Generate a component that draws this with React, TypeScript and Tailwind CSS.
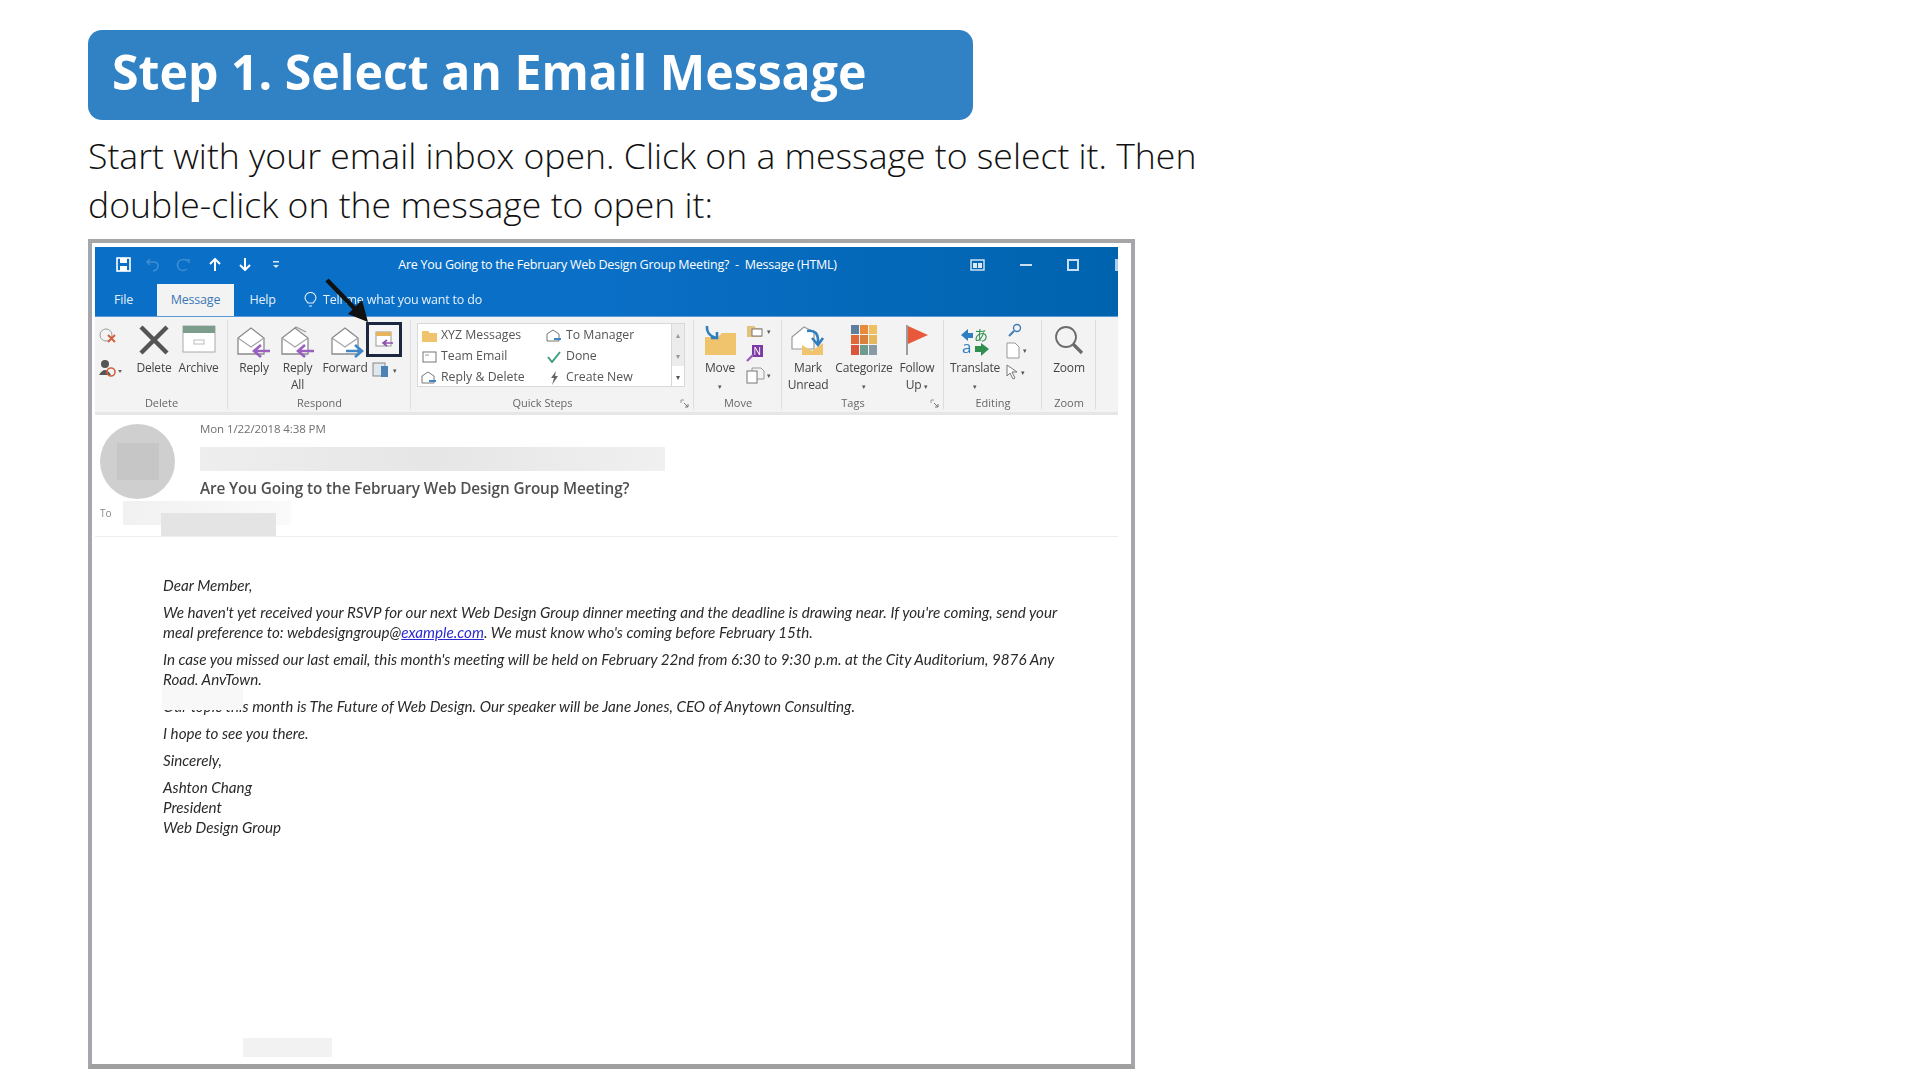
import React from 'react';

const Envelope = ({ arrow, back }: { arrow: string; back?: boolean }) => (
  <svg width="36" height="34" viewBox={arrow === 'left' ? '0 0 36 34' : '-3 0 36 34'} fill="none" className="overflow-visible">
    {back && <path d="M8 10 L16 2 L26 7" stroke="#999" strokeWidth="1.2" />}
    <path d="M2 13 L15 3 L28 13 V29 H2 Z" fill="#fff" stroke="#8a8a8a" strokeWidth="1.3" />
    <path d="M2 13 L15 22 L28 13" stroke="#a5a5a5" strokeWidth="1.2" />
    {arrow === 'left' ? (
      <path d="M34 26 H19 M25 20 L18 26 L25 32" stroke="#9a5fc0" strokeWidth="2.6" />
    ) : (
      <path d="M16 26 H31 M25 20 L32 26 L25 32" stroke="#3f86c6" strokeWidth="2.6" />
    )}
  </svg>
);

const DeleteX = () => (
  <svg width="32" height="30" viewBox="0 0 32 30" fill="none">
    <path d="M3 2 L29 28 M29 2 L3 28" stroke="#555" strokeWidth="4.5" />
  </svg>
);

const ArchiveBox = () => (
  <svg width="34" height="28" viewBox="0 0 34 28">
    <rect x="1" y="1" width="32" height="26" fill="#fff" stroke="#aaa" />
    <rect x="1" y="1" width="32" height="7" fill="#7c9c8c" />
    <rect x="12" y="15" width="10" height="4" fill="none" stroke="#bbb" />
  </svg>
);

const Folder = () => (
  <svg width="36" height="32" viewBox="0 0 36 32">
    <path d="M3 12 H16 L20 8 H34 V30 H3 Z" fill="#efc46c" />
    <path d="M5 1 Q4 10 14 13 M9 13 H15 V7" fill="none" stroke="#2f7fc0" strokeWidth="2.6" />
  </svg>
);

const MarkUnread = () => (
  <svg width="36" height="32" viewBox="0 0 36 32" fill="none">
    <path d="M2 12 L14 2 L24 7 V24 H2 Z" fill="#fff" stroke="#9a9a9a" strokeWidth="1.2" />
    <path d="M12 20 L22 26 L33 18 V30 H12 Z" fill="#efc46c" />
    <path d="M17 6 Q29 4 28 18 M22 13 L28 20 L33 13" stroke="#2f7fc0" strokeWidth="2.6" />
  </svg>
);

const Categorize = () => (
  <svg width="26" height="30" viewBox="0 0 26 30">
    <rect x="0" y="0" width="8" height="9" fill="#5f7f9f" />
    <rect x="9" y="0" width="8" height="9" fill="#e88a3c" />
    <rect x="18" y="0" width="8" height="9" fill="#f0c060" />
    <rect x="0" y="10" width="8" height="9" fill="#e0693c" />
    <rect x="9" y="10" width="8" height="9" fill="#d8803c" />
    <rect x="18" y="10" width="8" height="9" fill="#e6b85c" />
    <rect x="0" y="20" width="8" height="10" fill="#d8573c" />
    <rect x="9" y="20" width="8" height="10" fill="#6d9c8c" />
    <rect x="18" y="20" width="8" height="10" fill="#8a9aa5" />
  </svg>
);

const Flag = () => (
  <svg width="24" height="30" viewBox="0 0 24 30">
    <path d="M2 0 V30" stroke="#777" strokeWidth="1.4" />
    <path d="M3 1 L23 10 L3 19 Z" fill="#e8583a" />
  </svg>
);

const Translate = () => (
  <svg width="32" height="34" viewBox="0 0 32 34" fill="none">
    <path d="M2 10 L9 4 V8 H14 V13 H9 V16 Z" fill="#2f7fc0" />
    <text x="15" y="15" fontSize="14" fill="#2f8f4f" fontFamily="Noto Sans CJK JP, sans-serif">あ</text>
    <text x="3" y="28" fontSize="17" fill="#2f7fc0" fontFamily="Open Sans, sans-serif">a</text>
    <path d="M30 24 L22 31 V27 H16 V21 H22 V18 Z" fill="#2f8f4f" />
  </svg>
);

const Magnifier = () => (
  <svg width="30" height="30" viewBox="0 0 30 30" fill="none">
    <circle cx="12" cy="12" r="10" stroke="#6b6b6b" strokeWidth="1.8" />
    <path d="M19 19 L28 28" stroke="#6b6b6b" strokeWidth="3.2" />
  </svg>
);

const Launcher = () => (
  <svg width="9" height="9" viewBox="0 0 9 9" fill="none">
    <path d="M1 4 V1 H4" stroke="#999" />
    <path d="M4 4 L8 8 M8 5 V8 H5" stroke="#777" />
  </svg>
);

const Caret = () => <span className="text-[7px] leading-none text-[#555]">▾</span>;

const RibbonButton = ({
  width,
  icon,
  label,
  second,
}: {
  width: string;
  icon?: React.ReactNode;
  label: string;
  second?: React.ReactNode;
}) => (
  <div className={`flex flex-col items-center pt-[8px] ${width}`}>
    <div className="flex h-[34px] items-start justify-center">{icon}</div>
    <span className="text-[12px] leading-[17px] whitespace-nowrap tracking-[-0.2px] text-[#444]">{label}</span>
    {second && <span className="text-[12px] leading-[17px] whitespace-nowrap tracking-[-0.2px] text-[#444]">{second}</span>}
  </div>
);

const Group = ({
  width,
  label,
  launcher,
  children,
}: {
  width: string;
  label: string;
  launcher?: boolean;
  children: React.ReactNode;
}) => (
  <div className={`relative flex flex-col ${width}`}>
    <div className="flex h-[77px]">{children}</div>
    <div
      className={`flex h-[18px] items-start justify-center text-[11px] leading-[18px] text-[#666] ${
        launcher ? 'pr-[20px]' : ''
      }`}
    >
      {label}
    </div>
    {launcher && (
      <div className="absolute right-[5px] bottom-[4px]">
        <Launcher />
      </div>
    )}
    <div className="absolute top-[3px] right-0 bottom-[3px] w-px bg-[#dddddd]" />
  </div>
);

const QuickRow = ({ icon, label }: { icon: React.ReactNode; label: string }) => (
  <div className="flex h-[21px] items-center">
    <div className="flex w-[22px] justify-center">{icon}</div>
    <span className="pl-[1px] text-[12.3px] whitespace-nowrap text-[#555]">{label}</span>
  </div>
);

const MiniEnvelope = () => (
  <svg width="16" height="14" viewBox="0 0 16 14" fill="none">
    <path d="M1 5 L7 1 L13 5 V12 H1 Z" fill="#fff" stroke="#777" />
    <path d="M8 10 H15" stroke="#3f86c6" strokeWidth="2" />
  </svg>
);

const WindowChrome = () => (
  <div className="flex h-[35px] items-center text-white">
    <div className="flex w-[297px] items-center">
      <svg className="ml-[21px]" width="15" height="15" viewBox="0 0 15 15" fill="none">
        <rect x="1" y="1" width="13" height="13" stroke="#fff" strokeWidth="1.6" />
        <rect x="4" y="1" width="7" height="5" fill="#fff" />
        <rect x="4" y="9" width="7" height="5" fill="#fff" />
      </svg>
      <svg className="ml-[15px]" width="13" height="14" viewBox="0 0 13 14" fill="none">
        <path d="M4 1 L1 4 L4 7 M1 4 H8 Q12 4 12 8 Q12 12 7 13" stroke="#3f8ed2" strokeWidth="1.5" />
      </svg>
      <svg className="ml-[17px]" width="14" height="14" viewBox="0 0 14 14" fill="none">
        <path d="M10 2 H13 V5 M12 3 Q7 0 3 3 Q0 7 3 11 Q7 14 11 11" stroke="#3f8ed2" strokeWidth="1.5" />
      </svg>
      <svg className="ml-[19px]" width="12" height="13" viewBox="0 0 12 13" fill="none">
        <path d="M1 6 L6 1 L11 6 M6 2 V13" stroke="#fff" strokeWidth="2" />
      </svg>
      <svg className="ml-[18px]" width="12" height="13" viewBox="0 0 12 13" fill="none">
        <path d="M1 7 L6 12 L11 7 M6 11 V0" stroke="#fff" strokeWidth="2" />
      </svg>
      <svg className="ml-[22px]" width="6" height="9" viewBox="0 0 6 9" fill="#dbe9f6">
        <rect x="0" y="1" width="6" height="1.5" />
        <path d="M0 5 H6 L3 8 Z" />
      </svg>
    </div>
    <div className="w-[451px] pt-[1px] text-center text-[12.5px] tracking-[-0.25px] whitespace-nowrap">
      Are You Going to the February Web Design Group Meeting?&nbsp; -&nbsp; Message (HTML)
    </div>
    <div className="flex flex-1 items-center justify-end">
      <svg width="15" height="12" viewBox="0 0 15 12" fill="none">
        <rect x="1" y="1" width="13" height="10" stroke="#dbe9f6" strokeWidth="1.4" />
        <rect x="3" y="4" width="4" height="5" fill="#dbe9f6" />
        <rect x="8" y="4" width="4" height="5" fill="#dbe9f6" />
      </svg>
      <div className="ml-[35px] h-[2px] w-[12px] bg-[#c9def2]" />
      <div className="ml-[35px] h-[12px] w-[12px] border-2 border-[#c9def2]" />
      <div className="ml-[36px] h-[12px] w-[3px] bg-[#a9cdea]" />
    </div>
  </div>
);

const TabRow = () => (
  <div className="flex h-[34px] items-end text-[12.5px] tracking-[-0.2px] text-[#e6f0fa]">
    <div className="flex h-[32px] w-[62px] items-center pl-[19px]">File</div>
    <div className="flex h-[32px] w-[77px] items-center justify-center bg-[#f3f3f3] text-[#3a78b5]">Message</div>
    <div className="flex h-[32px] w-[57px] items-center justify-center">Help</div>
    <div className="flex h-[32px] items-center pl-[13px]">
      <svg width="13" height="16" viewBox="0 0 13 16" fill="none">
        <path d="M4 11 Q1 8 1 6 A5.5 5.5 0 0 1 12 6 Q12 8 9 11 Z M5 14 H8" stroke="#e6f0fa" strokeWidth="1.1" />
      </svg>
      <span className="pl-[6px] whitespace-nowrap">Tell me what you want to do</span>
    </div>
  </div>
);

const Ribbon = () => (
  <div className="flex h-[95px] bg-[#f3f3f3]">
    <Group width="w-[133px]" label="Delete">
      <div className="flex w-[37px] flex-col items-start gap-[14px] pt-[10px] pl-[3px]">
        <svg width="20" height="18" viewBox="0 0 20 18" fill="none">
          <circle cx="8" cy="8" r="6" stroke="#999" />
          <path d="M10 8 L17 15 M17 8 L10 15" stroke="#d2603c" strokeWidth="1.8" />
        </svg>
        <svg width="24" height="18" viewBox="0 0 24 18">
          <circle cx="7" cy="5" r="4" fill="#555" />
          <path d="M1 16 Q7 6 13 16 Z" fill="#555" />
          <circle cx="13" cy="13" r="4" fill="none" stroke="#d2603c" strokeWidth="1.6" />
          <path d="M20 11 H24 L22 14 Z" fill="#666" />
        </svg>
      </div>
      <RibbonButton width="w-[44px]" icon={<DeleteX />} label="Delete" />
      <RibbonButton width="w-[45px]" icon={<ArchiveBox />} label="Archive" />
    </Group>
    <Group width="w-[183px]" label="Respond">
      <div className="w-[6px]" />
      <RibbonButton width="w-[40px]" icon={<Envelope arrow="left" />} label="Reply" />
      <RibbonButton width="w-[47px]" icon={<Envelope arrow="left" back />} label="Reply" second="All" />
      <RibbonButton width="w-[48px]" icon={<Envelope arrow="right" />} label="Forward" />
      <div className="ml-[-3px] flex flex-col items-center pt-[5px]">
        <div className="flex h-[35px] w-[36px] items-center justify-center border-[3.5px] border-[#1c2840] bg-[#f5f5f5]">
          <svg width="19" height="18" viewBox="0 0 19 18">
            <rect x="1" y="1" width="15" height="14" fill="#fff" stroke="#999" />
            <rect x="1" y="1" width="15" height="4" fill="#e5b45c" />
            <path d="M9 12 H18 M12 9 L8 12 L12 15" fill="none" stroke="#8a4fb0" strokeWidth="1.6" />
          </svg>
        </div>
        <div className="flex items-center gap-[3px] pt-[5px]">
          <svg width="18" height="16" viewBox="0 0 18 16">
            <rect x="1" y="1" width="12" height="13" fill="#dfe8ef" stroke="#888" />
            <rect x="9" y="4" width="7" height="11" fill="#4a82b5" />
          </svg>
          <Caret />
        </div>
      </div>
    </Group>
    <Group width="w-[283px]" label="Quick Steps" launcher>
      <div className="mt-[6px] ml-[6px] flex h-[64px] w-[255px] border border-[#d8d8d8] bg-white pt-[1px]">
        <div className="w-[125px]">
          <QuickRow
            label="XYZ Messages"
            icon={
              <svg width="17" height="13" viewBox="0 0 17 13">
                <path d="M1 2 H7 L9 4 H16 V13 H1 Z" fill="#efc46c" />
              </svg>
            }
          />
          <QuickRow
            label="Team Email"
            icon={
              <svg width="15" height="12" viewBox="0 0 15 12" fill="none">
                <rect x="1" y="1" width="13" height="10" stroke="#777" />
                <path d="M3 4 H7" stroke="#999" />
              </svg>
            }
          />
          <QuickRow label="Reply & Delete" icon={<MiniEnvelope />} />
        </div>
        <div>
          <QuickRow label="To Manager" icon={<MiniEnvelope />} />
          <QuickRow
            label="Done"
            icon={
              <svg width="14" height="12" viewBox="0 0 14 12" fill="none">
                <path d="M1 6 L5 11 L13 1" stroke="#3f9c7c" strokeWidth="2" />
              </svg>
            }
          />
          <QuickRow
            label="Create New"
            icon={
              <svg width="10" height="14" viewBox="0 0 10 14">
                <path d="M7 0 L2 7 H5 L3 14 L9 5 H6 Z" fill="#666" />
              </svg>
            }
          />
        </div>
      </div>
      <div className="mt-[6px] flex h-[64px] w-[13px] flex-col border-y border-r border-[#d8d8d8] text-center text-[8px] leading-[21px] text-[#999]">
        <div className="h-[21px] bg-[#ececec]">▴</div>
        <div className="h-[21px] bg-[#ececec]">▾</div>
        <div className="h-[20px] bg-white text-[#555]">▾</div>
      </div>
    </Group>
    <Group width="w-[88px]" label="Move">
      <div className="w-[6px]" />
      <RibbonButton width="w-[40px]" icon={<Folder />} label="Move" second={<Caret />} />
      <div className="flex flex-col gap-[5px] pt-[6px] pl-[6px]">
        <div className="flex items-center gap-[2px]">
          <svg width="19" height="16" viewBox="0 0 19 16">
            <path d="M1 3 H8 L10 5 H16 V14 H1 Z" fill="#e3c27e" />
            <rect x="6" y="6" width="10" height="7" fill="#fff" stroke="#777" />
          </svg>
          <Caret />
        </div>
        <svg width="18" height="18" viewBox="0 0 18 18">
          <rect x="6" y="1" width="11" height="12" fill="#7d3aa5" />
          <text x="7.5" y="11" fontSize="10" fill="#fff" fontFamily="Open Sans, sans-serif">N</text>
          <path d="M1 17 L7 11" stroke="#9a5fc0" strokeWidth="2.4" />
        </svg>
        <div className="flex items-center gap-[2px]">
          <svg width="19" height="17" viewBox="0 0 19 17" fill="none">
            <rect x="1" y="4" width="10" height="12" fill="#fff" stroke="#777" />
            <path d="M6 4 V1 H15 L18 4 V12 H11" stroke="#999" />
          </svg>
          <Caret />
        </div>
      </div>
    </Group>
    <Group width="w-[162px]" label="Tags" launcher>
      <RibbonButton width="w-[52px]" icon={<MarkUnread />} label="Mark" second="Unread" />
      <RibbonButton width="w-[60px]" icon={<Categorize />} label="Categorize" second={<Caret />} />
      <RibbonButton
        width="w-[46px]"
        icon={<Flag />}
        label="Follow"
        second={
          <>
            Up <Caret />
          </>
        }
      />
    </Group>
    <Group width="w-[98px]" label="Editing">
      <RibbonButton width="w-[62px]" icon={<Translate />} label="Translate" second={<Caret />} />
      <div className="flex flex-col items-start gap-[5px] pt-[6px]">
        <svg className="ml-[2px]" width="14" height="14" viewBox="0 0 14 14" fill="none">
          <circle cx="9" cy="5" r="3.5" stroke="#3f7fb5" strokeWidth="1.4" />
          <path d="M6 8 L1 13" stroke="#3f7fb5" strokeWidth="2" />
        </svg>
        <div className="flex items-center gap-[3px]">
          <svg width="14" height="17" viewBox="0 0 14 17" fill="#fff" stroke="#999">
            <path d="M1 1 H9 L13 5 V16 H1 Z" />
          </svg>
          <Caret />
        </div>
        <div className="flex items-center gap-[3px]">
          <svg width="12" height="16" viewBox="0 0 12 16" fill="#fff" stroke="#777">
            <path d="M1 1 L1 12 L4 9 L7 15 L9 14 L6 8 L11 8 Z" />
          </svg>
          <Caret />
        </div>
      </div>
    </Group>
    <Group width="w-[54px]" label="Zoom">
      <RibbonButton width="w-[54px]" icon={<Magnifier />} label="Zoom" />
    </Group>
  </div>
);

const MessageHeader = () => (
  <div className="flex h-[122px] border-b border-[#eeeeee] pl-[5px]">
    <div className="flex w-[75px] shrink-0 flex-col">
      <div className="mt-[9px] flex h-[75px] w-[75px] items-center justify-center rounded-full bg-[#cfcfcf]">
        <div className="h-[37px] w-[42px] bg-[#c6c6c6]" />
      </div>
      <div className="flex items-center pt-[2px]">
        <span className="text-[10px] text-[#888]">To</span>
        <div className="ml-[11px] h-[24px] w-[168px] shrink-0 bg-gradient-to-r from-[#f1f1f1] to-[#fafafa]" />
      </div>
    </div>
    <div className="flex flex-col pl-[25px]">
      <div className="pt-[6px] text-[11.5px] leading-[16px] tracking-[-0.1px] text-[#707070]">Mon 1/22/2018 4:38 PM</div>
      <div className="mt-[10px] h-[24px] w-[465px] bg-gradient-to-r from-[#eeeeee] via-[#e6e6e6] to-[#f0f0f0]" />
      <div className="pt-[6px] text-[15.3px] leading-[22px] font-semibold tracking-[-0.1px] text-[#505050]">
        Are You Going to the February Web Design Group Meeting?
      </div>
    </div>
  </div>
);

const MessageBody = () => (
  <div className="pt-[38px] pl-[68px] text-[15.2px] leading-[20px] text-[#2a2a2a] italic [font-family:Lato,sans-serif]">
    <p className="mb-[7px]">Dear Member,</p>
    <p className="mb-[7px] w-[960px]">
      We haven't yet received your RSVP for our next Web Design Group dinner meeting and the deadline is drawing near. If
      you're coming, send your
      <br />
      meal preference to: webdesigngroup@<span className="text-[#2a2ad0] underline">example.com</span>. We must know who's
      coming before February 15th.
    </p>
    <p className="mb-[7px] w-[960px]">
      In case you missed our last email, this month's meeting will be held on February 22nd from 6:30 to 9:30 p.m. at the
      City Auditorium, 9876 Any
      <br />
      Road, AnyTown.
    </p>
    <p className="mb-[7px]">Our topic this month is The Future of Web Design. Our speaker will be Jane Jones, CEO of Anytown Consulting.</p>
    <p className="mb-[7px]">I hope to see you there.</p>
    <p className="mb-[7px]">Sincerely,</p>
    <p>
      Ashton Chang
      <br />
      President
      <br />
      Web Design Group
    </p>
  </div>
);

export default function App() {
  return (
    <div className="h-[1080px] w-[1920px] overflow-hidden bg-white pt-[30px] pl-[88px] [font-family:'Open_Sans',sans-serif]">
      <div className="flex h-[90px] w-[885px] items-center rounded-[14px] bg-[#3182c4] pb-[7px] pl-[24px] text-[48.2px] font-bold text-white">
        Step 1. Select an Email Message
      </div>
      <p className="mt-[11px] w-[1150px] text-[35.6px] leading-[49px] font-light text-[#111]">
        Start with your email inbox open. Click on a message to select it. Then double-click on the message to open it:
      </p>
      <div className="relative mt-[10px] h-[830px] w-[1047px] border-x-4 border-t-4 border-b-[5px] border-x-[#a6a6ae] border-t-[#a6a6a6] border-b-[#a0a0a0] bg-white pt-[4px] pl-[3px]">
        <div className="w-[1023px] blur-[0.6px]">
          <div className="bg-gradient-to-r from-[#0a6fc6] via-[#0a6fc6] to-[#0063ae]">
            <WindowChrome />
            <TabRow />
          </div>
          <div className="h-px bg-[#5a9ad6]" />
          <Ribbon />
          <div className="h-[3px] bg-[#e6e6e6]" />
          <MessageHeader />
          <MessageBody />
        </div>
        {/* arrow and the cover-up patches sit on top of the screenshot */}
        <svg className="absolute top-[35px] left-[232px]" width="48" height="48" viewBox="0 0 48 48" fill="none">
          <path d="M3 2 L34 34" stroke="#111" strokeWidth="4.5" />
          <path d="M44 44 L24 36 L38 22 Z" fill="#111" />
        </svg>
        <div className="absolute top-[270px] left-[69px] h-[23px] w-[115px] bg-[#e4e4e4]" />
        <div className="absolute top-[442px] left-[70px] h-[25px] w-[81px] bg-[#f8f8f8]" />
        <div className="absolute top-[795px] left-[151px] h-[19px] w-[89px] bg-[#f2f2f2]" />
      </div>
    </div>
  );
}
